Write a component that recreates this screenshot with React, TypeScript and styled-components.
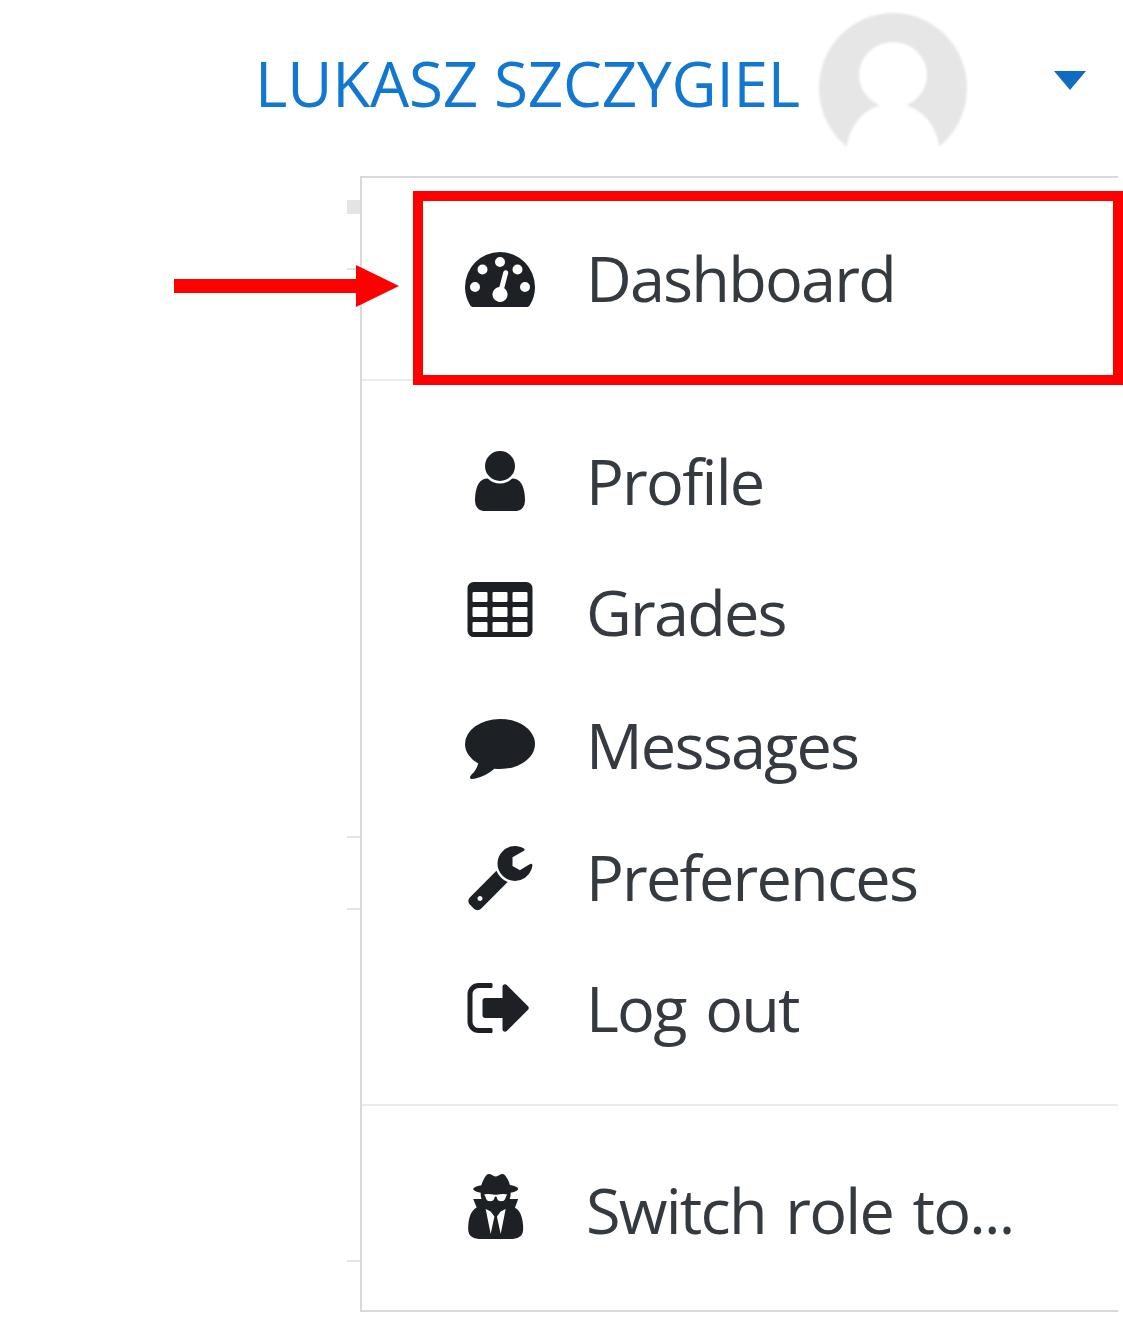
import React from 'react';
import styled, { createGlobalStyle } from 'styled-components';

const GlobalStyle = createGlobalStyle`
    html, body {
        margin: 0;
        padding: 0;
        background: #ffffff;
    }
`;

const Page = styled.div`
    position: relative;
    width: 1123px;
    height: 1328px;
    overflow: hidden;
    font-family: "Open Sans", "Liberation Sans", sans-serif;
    background: #ffffff;
`;

const Header = styled.header`
    display: flex;
    justify-content: flex-end;
    height: 176px;
    padding-right: 37px;
`;

const UserName = styled.a`
    margin-top: 43px;
    margin-right: 18px;
    font-size: 62px;
    line-height: 80px;
    letter-spacing: -0.2px;
    color: #1177d1;
    white-space: nowrap;
    filter: blur(0.6px);
`;

const Avatar = styled.svg`
    width: 150px;
    height: 152px;
    margin-top: 13px;
    margin-right: 86px;
    filter: blur(1px);
`;

const Caret = styled.div`
    width: 0;
    height: 0;
    margin-top: 71px;
    border-left: 16px solid transparent;
    border-right: 16px solid transparent;
    border-top: 19px solid #0f6cbf;
    filter: blur(0.5px);
`;

const Menu = styled.nav`
    margin-left: 360px;
    width: 758px;
    height: 1136px;
    box-sizing: border-box;
    border: 2px solid #d9d9d9;
    border-right: none;
    display: flex;
    flex-direction: column;
`;

const Section = styled.div<{ $height: number; $paddingTop: number }>`
    height: ${(p) => p.$height}px;
    padding-top: ${(p) => p.$paddingTop}px;
    box-sizing: border-box;
    border-bottom: 2px solid #e9ecef;

    &:last-child {
        border-bottom: none;
    }
`;

const Item = styled.a<{ $height: number }>`
    display: flex;
    align-items: center;
    height: ${(p) => p.$height}px;
    padding-left: 103px;
    color: #343a40;
    font-size: 63px;
    letter-spacing: -1.8px;
    word-spacing: 5px;
    white-space: nowrap;
`;

const IconBox = styled.svg`
    flex: none;
    width: 70px;
    height: 70px;
    margin-right: 51px;
    fill: #1d2125;
    filter: blur(0.6px);
`;

const Label = styled.span`
    filter: blur(0.6px);
`;

const Highlight = styled.div`
    position: absolute;
    left: 413px;
    top: 191px;
    width: 710px;
    height: 194px;
    box-sizing: border-box;
    border: 10px solid #ff0000;
`;

const Arrow = styled.svg`
    position: absolute;
    left: 174px;
    top: 265px;
    width: 225px;
    height: 42px;
    fill: #ff0000;
`;

const Tick = styled.div<{ $top: number; $height: number }>`
    position: absolute;
    left: 347px;
    top: ${(p) => p.$top}px;
    width: 13px;
    height: ${(p) => p.$height}px;
    background: #e4e4e4;
`;

const icons = {
    dashboard:
        'M384 1152q0-53-37.5-90.5t-90.5-37.5-90.5 37.5-37.5 90.5 37.5 90.5 90.5 37.5 90.5-37.5 37.5-90.5zm192-448q0-53-37.5-90.5t-90.5-37.5-90.5 37.5-37.5 90.5 37.5 90.5 90.5 37.5 90.5-37.5 37.5-90.5zm428 481l101-382q6-26-7.5-48.5t-38.5-29.5-48 6.5-30 39.5l-101 382q-60 5-107 43.5t-63 98.5q-20 77 20 146t117 89 146-20 89-117q16-60-6-117t-72-91zm660-33q0-53-37.5-90.5t-90.5-37.5-90.5 37.5-37.5 90.5 37.5 90.5 90.5 37.5 90.5-37.5 37.5-90.5zm-640-640q0-53-37.5-90.5t-90.5-37.5-90.5 37.5-37.5 90.5 37.5 90.5 90.5 37.5 90.5-37.5 37.5-90.5zm448 192q0-53-37.5-90.5t-90.5-37.5-90.5 37.5-37.5 90.5 37.5 90.5 90.5 37.5 90.5-37.5 37.5-90.5zm320 448q0 261-141 483-19 29-54 29h-1402q-35 0-54-29-141-221-141-483 0-182 71-348t191-286 286-191 348-71 348 71 286 191 191 286 71 348z',
    user: 'M1536 1399q0 109-62.5 187t-150.5 78h-854q-88 0-150.5-78t-62.5-187q0-85 8.5-160.5t31.5-152 58.5-131 94-89 134.5-34.5q131 128 313 128t313-128q76 0 134.5 34.5t94 89 58.5 131 31.5 152 8.5 160.5zm-256-887q0 159-112.5 271.5t-271.5 112.5-271.5-112.5-112.5-271.5 112.5-271.5 271.5-112.5 271.5 112.5 112.5 271.5z',
    table:
        'M576 1376v-192q0-14-9-23t-23-9h-320q-14 0-23 9t-9 23v192q0 14 9 23t23 9h320q14 0 23-9t9-23zm0-384v-192q0-14-9-23t-23-9h-320q-14 0-23 9t-9 23v192q0 14 9 23t23 9h320q14 0 23-9t9-23zm512 384v-192q0-14-9-23t-23-9h-320q-14 0-23 9t-9 23v192q0 14 9 23t23 9h320q14 0 23-9t9-23zm-512-768v-192q0-14-9-23t-23-9h-320q-14 0-23 9t-9 23v192q0 14 9 23t23 9h320q14 0 23-9t9-23zm512 384v-192q0-14-9-23t-23-9h-320q-14 0-23 9t-9 23v192q0 14 9 23t23 9h320q14 0 23-9t9-23zm512 384v-192q0-14-9-23t-23-9h-320q-14 0-23 9t-9 23v192q0 14 9 23t23 9h320q14 0 23-9t9-23zm-512-768v-192q0-14-9-23t-23-9h-320q-14 0-23 9t-9 23v192q0 14 9 23t23 9h320q14 0 23-9t9-23zm512 384v-192q0-14-9-23t-23-9h-320q-14 0-23 9t-9 23v192q0 14 9 23t23 9h320q14 0 23-9t9-23zm0-384v-192q0-14-9-23t-23-9h-320q-14 0-23 9t-9 23v192q0 14 9 23t23 9h320q14 0 23-9t9-23zm128-320v1088q0 66-47 113t-113 47h-1344q-66 0-113-47t-47-113v-1088q0-66 47-113t113-47h1344q66 0 113 47t47 113z',
    comment:
        'M1792 896q0 174-120 321.5t-326 233-450 85.5q-70 0-145-8-198 175-460 242-49 14-114 22-17 2-30.5-9t-17.5-29v-1q-3-4-.5-12t2-10 4.5-9.5l6-9 7-8.5 8-9q7-8 31-34.5t34.5-38 31-39.5 32.5-51 27-59 26-76q-157-89-247.5-220t-90.5-281q0-130 71-248.5t191-204.5 286-136.5 348-50.5q244 0 450 85.5t326 233 120 321.5z',
    wrench:
        'M448 1472q0-26-19-45t-45-19-45 19-19 45 19 45 45 19 45-19 19-45zm644-420l-682 682q-37 37-90 37-52 0-91-37l-106-108q-38-36-38-90 0-53 38-91l681-681q39 98 114.5 173.5t173.5 114.5zm634-435q0 39-23 106-47 134-164.5 217.5t-258.5 83.5q-185 0-316.5-131.5t-131.5-316.5 131.5-316.5 316.5-131.5q58 0 121.5 16.5t107.5 46.5q16 11 16 28t-16 28l-293 169v224l193 107q5-3 79-48.5t135.5-81 70.5-35.5q15 0 23.5 10t8.5 25z',
    signOut:
        'M704 1440q0 4 1 20t.5 26.5-3 23.5-10 19.5-20.5 6.5h-320q-119 0-203.5-84.5t-84.5-203.5v-704q0-119 84.5-203.5t203.5-84.5h320q13 0 22.5 9.5t9.5 22.5q0 4 1 20t.5 26.5-3 23.5-10 19.5-20.5 6.5h-320q-66 0-113 47t-47 113v704q0 66 47 113t113 47h312l11.5 1 11.5 3 8 5.5 7 9 2 13.5zm928-544q0 26-19 45l-544 544q-19 19-45 19t-45-19-19-45v-288h-448q-26 0-45-19t-19-45v-384q0-26 19-45t45-19h448v-288q0-26 19-45t45-19 45 19l544 544q19 19 19 45z',
    secret:
        'M657 1536l96-448-96-128-128-64zm256 0l128-640-128 64-96 128zm160-1010q-2-4-4-6-10-8-96-8-70 0-167 19-7 2-21 2t-21-2q-97-19-167-19-86 0-96 8-2 2-4 6 2 18 4 27 2 3 7.5 6.5t7.5 10.5q2 4 7.5 20.5t7 20.5 7.5 17 8.5 17 9 14 12 13.5 14 9.5 17.5 8 20.5 4 24.5 2q36 0 59-12.5t32.5-30 14.5-34.5 11.5-29.5 17.5-12.5h12q11 0 17.5 12.5t11.5 29.5 14.5 34.5 32.5 30 59 12.5q13 0 24.5-2t20.5-4 17.5-8 14-9.5 12-13.5 9-14 8.5-17 7.5-17 7-20.5 7.5-20.5q2-7 7.5-10.5t7.5-6.5q2-9 4-27zm416 879q0 121-73 190t-194 69h-874q-121 0-194-69t-73-190q0-61 4.5-118t19-125.5 37.5-123.5 63.5-103.5 93.5-74.5l-90-220h214q-22-64-22-128 0-12 2-32-194-40-194-96 0-57 210-99 17-62 51.5-134t70.5-114q32-37 76-37 30 0 84 31t84 31 84-31 84-31q44 0 76 36 36 42 70.5 114t51.5 134q210 42 210 99 0 56-194 96 7 81-20 160h214l-82 225q63 33 107.5 96.5t65.5 143.5 29 151.5 8 148.5z',
};

type ItemProps = {
    icon: keyof typeof icons;
    label: string;
    height: number;
};

function MenuItem(props: ItemProps) {
    return (
        <Item $height={props.height}>
            <IconBox viewBox="0 0 1792 1792">
                <path d={icons[props.icon]} />
            </IconBox>
            <Label>{props.label}</Label>
        </Item>
    );
}

function App() {
    return (
        <Page>
            <GlobalStyle />
            <Header>
                <UserName>LUKASZ SZCZYGIEL</UserName>
                <Avatar viewBox="0 0 150 152">
                    <ellipse cx="75" cy="75" rx="74" ry="75" fill="#e6e6e6" />
                    <ellipse cx="75" cy="62" rx="34" ry="33" fill="#ffffff" />
                    <path d="M27 152 Q27 104 62 92 L88 92 Q123 104 123 152 Z" fill="#ffffff" />
                </Avatar>
                <Caret />
            </Header>
            <Menu>
                <Section $height={203} $paddingTop={34}>
                    <MenuItem icon="dashboard" label="Dashboard" height={130} />
                </Section>
                <Section $height={727} $paddingTop={35}>
                    <MenuItem icon="user" label="Profile" height={130} />
                    <MenuItem icon="table" label="Grades" height={132} />
                    <MenuItem icon="comment" label="Messages" height={133} />
                    <MenuItem icon="wrench" label="Preferences" height={131} />
                    <MenuItem icon="signOut" label="Log out" height={132} />
                </Section>
                <Section $height={204} $paddingTop={38}>
                    <MenuItem icon="secret" label="Switch role to..." height={130} />
                </Section>
            </Menu>
            <Tick $top={200} $height={14} />
            <Tick $top={268} $height={2} />
            <Tick $top={836} $height={2} />
            <Tick $top={908} $height={2} />
            <Tick $top={1260} $height={2} />
            <Highlight />
            <Arrow viewBox="0 0 225 42">
                <path d="M0 14 H182 V0 L225 21 L182 42 V28 H0 Z" />
            </Arrow>
        </Page>
    );
}

export default App;
